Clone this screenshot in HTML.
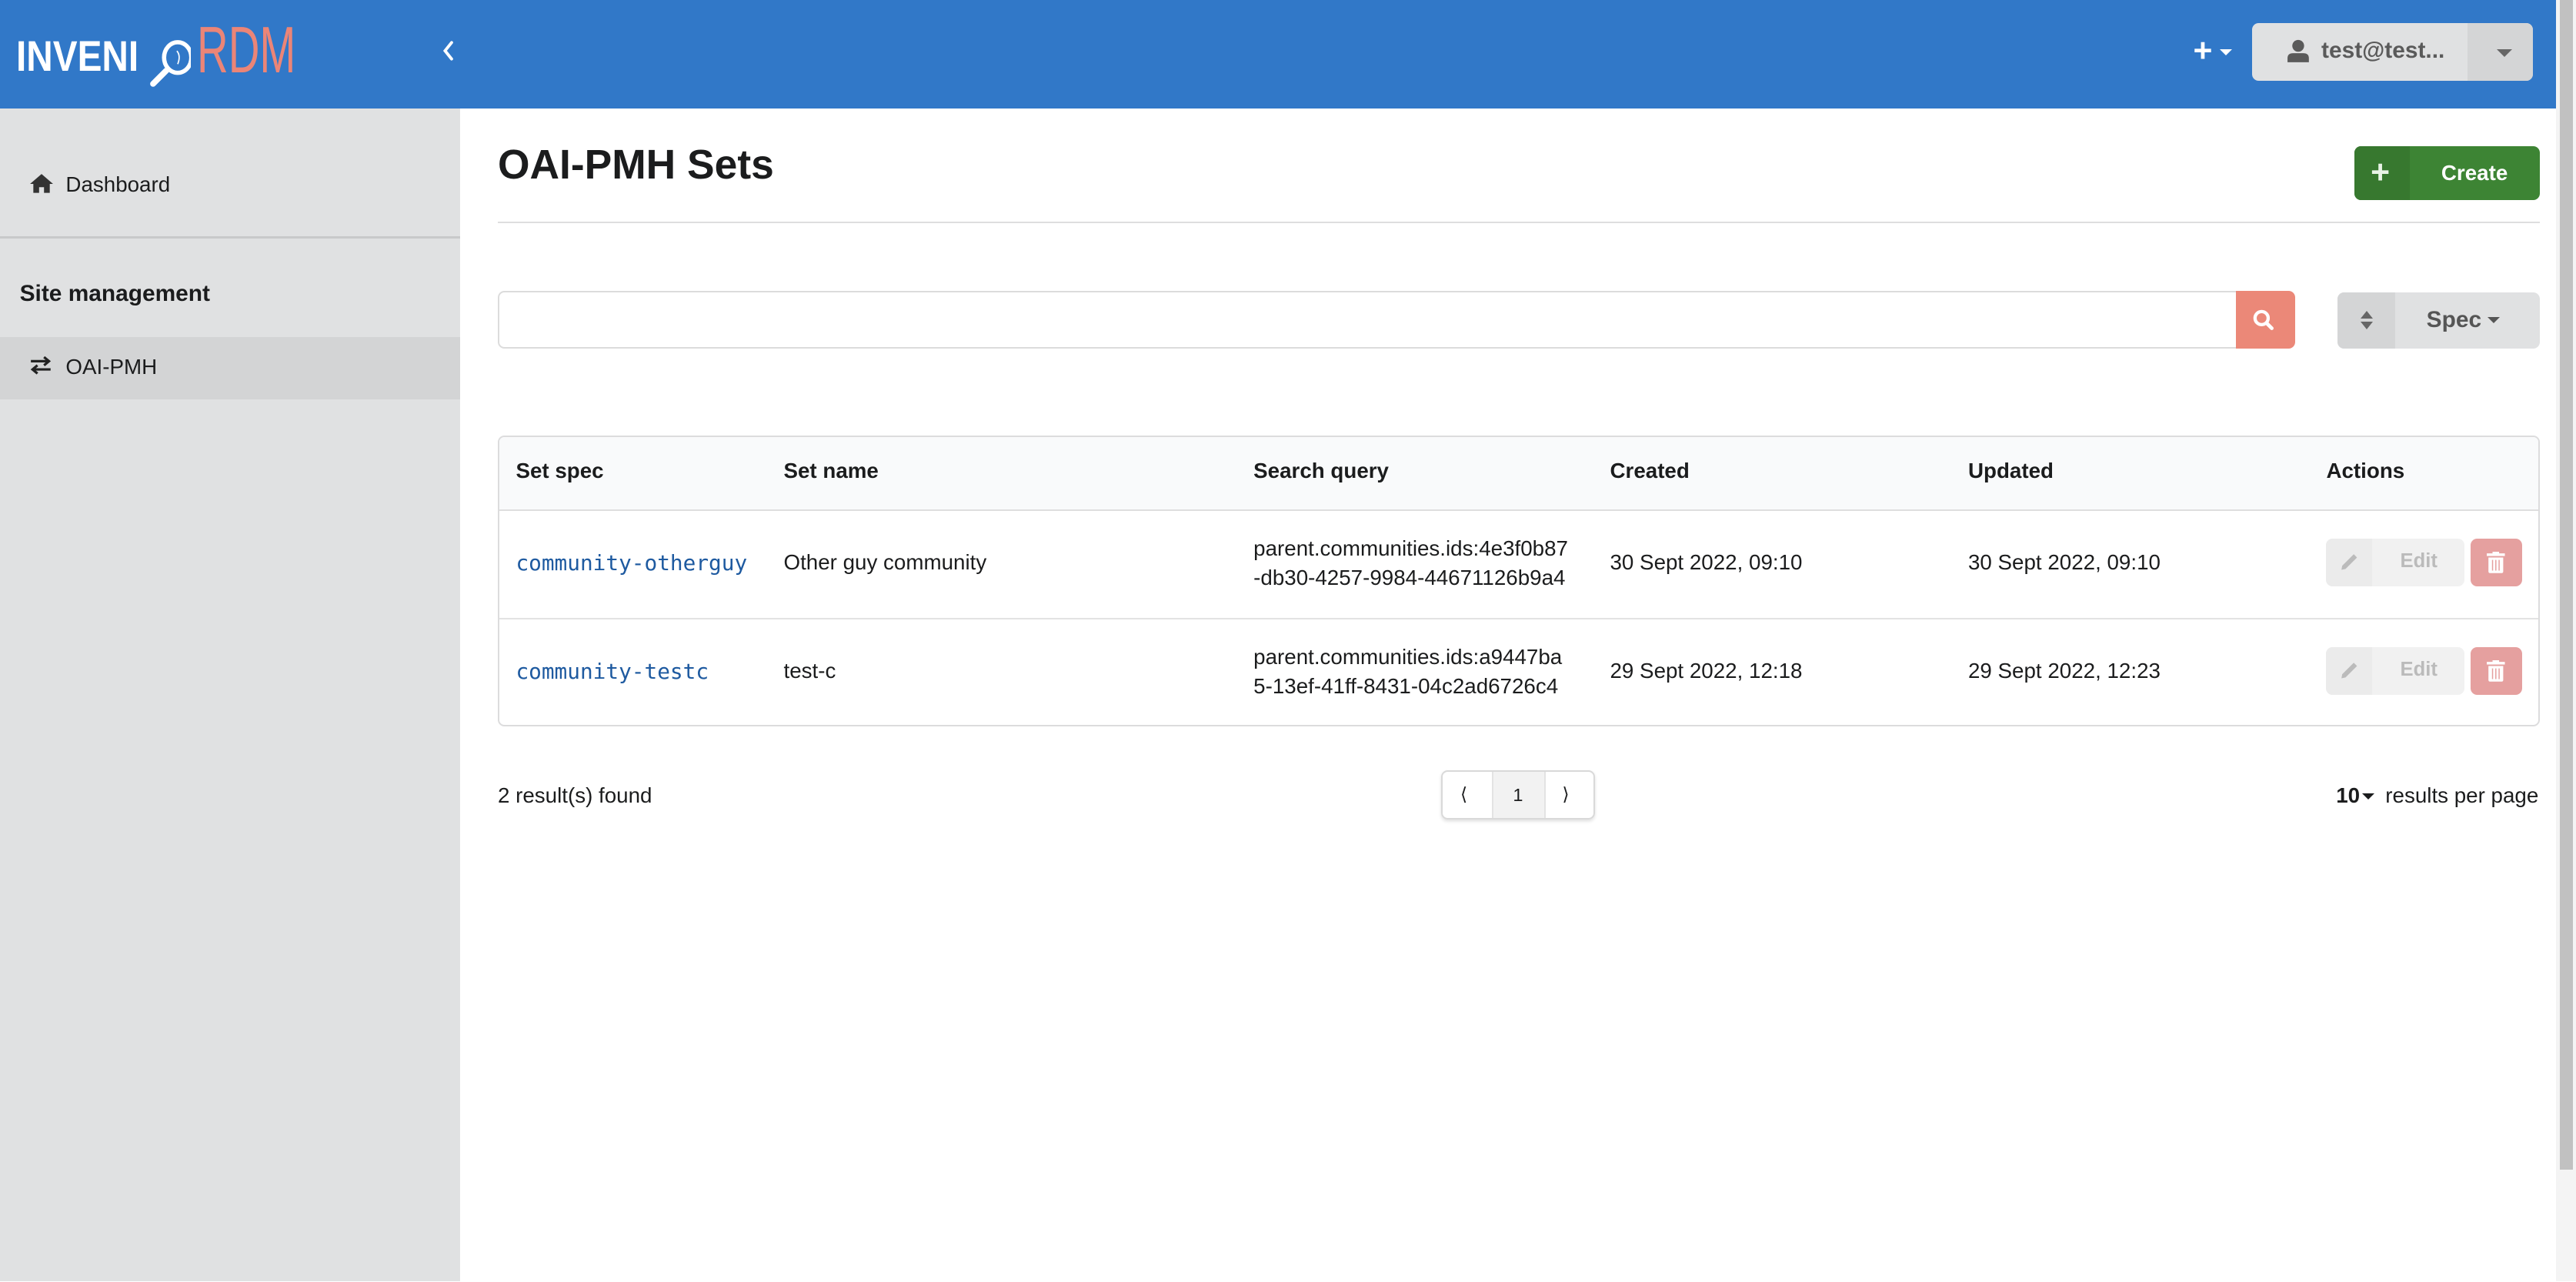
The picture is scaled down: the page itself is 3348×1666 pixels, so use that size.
<!DOCTYPE html>
<html><head><meta charset="utf-8"><style>
html,body{margin:0;padding:0;}
body{width:3348px;height:1666px;overflow:hidden;background:#fff;font-family:"Liberation Sans",Arial,sans-serif;}
#w{zoom:2.13520;width:1568px;height:780px;position:relative;color:#1b1c1d;font-size:13px;}
.a{position:absolute;}
.hdr{left:0;top:0;width:1556px;height:66px;background:#3178c8;}
.side{left:0;top:66px;width:280px;height:714px;background:#e0e1e2;}
.sb{left:1556px;top:0;width:12px;height:780px;background:#f4f4f4;}
.sbt{left:1558px;top:0;width:8px;height:712px;background:#c1c1c1;border-radius:0;}
.btn{border-radius:4px;}
</style></head><body><div id="w">
<div class="a hdr"></div>
<div class="a" style="left:10px;top:19px;color:#fff;font-weight:bold;font-size:26px;line-height:30px;white-space:nowrap;transform-origin:0 0;transform:scaleX(0.86);">INVENI</div>
<svg class="a" style="left:86px;top:22px" width="30" height="32" viewBox="0 0 30 32"><ellipse cx="22" cy="13" rx="8.3" ry="9.3" fill="none" stroke="#fff" stroke-width="2.6"/><path d="M21.5 9 Q24 12 22 17" fill="none" stroke="#fff" stroke-width="0.8"/><line x1="15" y1="21" x2="7" y2="29" stroke="#fff" stroke-width="3.6" stroke-linecap="round"/></svg>
<div class="a" style="left:120px;top:11px;color:#eb8577;font-size:40px;line-height:40px;white-space:nowrap;transform-origin:0 0;transform:scaleX(0.66);">RDM</div>
<svg class="a" style="left:268px;top:24px" width="10" height="14" viewBox="0 0 10 14"><path d="M7 2 L3 7 L7 12" fill="none" stroke="#fff" stroke-width="1.8" stroke-linecap="round"/></svg>
<div class="a" style="left:1335px;top:21px;color:#fff;font-size:20px;font-weight:bold;line-height:20px;">+</div>
<div class="a" style="left:1351px;top:30px;width:0;height:0;border-left:4px solid transparent;border-right:4px solid transparent;border-top:4px solid #fff;"></div>
<div class="a btn" style="left:1371px;top:14px;width:171px;height:35px;background:#e0e1e2;overflow:hidden;">
 <div class="a" style="right:0;top:0;width:40px;height:35px;background:#d4d5d6;"></div>
 <svg class="a" style="left:21px;top:10px" width="14" height="14" viewBox="0 0 14 14"><circle cx="7" cy="4" r="3.6" fill="#5a5a5a"/><path d="M0.5 14 V11.5 Q0.5 8.5 4 8.5 H10 Q13.5 8.5 13.5 11.5 V14Z" fill="#5a5a5a"/></svg>
 <div class="a" style="left:42px;top:9px;font-size:14px;font-weight:bold;color:#5a5a5a;">test@test...</div>
 <div class="a" style="right:13px;top:16px;border-left:5px solid transparent;border-right:5px solid transparent;border-top:5px solid #666;"></div>
</div>
<div class="a side"></div>
<div class="a" style="left:0;top:144px;width:280px;height:1px;background:#c8c9ca"></div>
<svg class="a" style="left:18px;top:105px" width="15" height="13" viewBox="0 0 15 13"><path d="M7.5 1 L0.5 7 H2.5 V12.5 H6 V9 H9 V12.5 H12.5 V7 H14.5Z" fill="#333"/></svg>
<div class="a" style="left:40px;top:105px;font-size:13px;">Dashboard</div>
<div class="a" style="left:12px;top:171px;font-size:14px;font-weight:bold;">Site management</div>
<div class="a" style="left:0;top:205px;width:280px;height:38px;background:#d3d4d5"></div>
<svg class="a" style="left:18px;top:217px" width="14" height="11" viewBox="0 0 14 11"><path d="M1 3 H12 M9 0.5 L12 3 L9 5.5 M13 8 H2 M5 5.5 L2 8 L5 10.5" fill="none" stroke="#222" stroke-width="1.5"/></svg>
<div class="a" style="left:40px;top:216px;font-size:13px;">OAI-PMH</div>
<div class="a sb"></div><div class="a sbt"></div>

<div class="a" style="left:303px;top:86px;font-size:25px;font-weight:bold;">OAI-PMH Sets</div>
<div class="a btn" style="left:1433px;top:89px;width:113px;height:33px;background:#3d8434;overflow:hidden;">
 <div class="a" style="left:0;top:0;width:34px;height:33px;background:#37782f"></div>
 <div class="a" style="left:10px;top:6px;color:#e8f3e6;font-size:20px;font-weight:bold;line-height:20px;">+</div>
 <div class="a" style="left:53px;top:9px;color:#fff;font-size:13px;font-weight:bold;">Create</div>
</div>
<div class="a" style="left:303px;top:135px;width:1243px;height:1px;background:#dededf"></div>

<div class="a" style="left:303px;top:177px;width:1093px;height:35px;border:1px solid #dcdcdc;border-radius:4px;box-sizing:border-box;"></div>
<div class="a" style="left:1361px;top:177px;width:36px;height:35px;background:#eb8878;border-radius:0 4px 4px 0;"></div>
<svg class="a" style="left:1371px;top:188px" width="14" height="14" viewBox="0 0 14 14"><circle cx="5.8" cy="5.8" r="4" fill="none" stroke="#fff" stroke-width="2"/><line x1="8.8" y1="8.8" x2="12" y2="12" stroke="#fff" stroke-width="2.2" stroke-linecap="round"/></svg>
<div class="a btn" style="left:1423px;top:178px;width:123px;height:34px;background:#e0e1e2;overflow:hidden;">
 <div class="a" style="left:0;top:0;width:35px;height:34px;background:#d4d5d6"></div>
 <div class="a" style="left:14px;top:11px;border-left:4px solid transparent;border-right:4px solid transparent;border-bottom:5px solid #666"></div>
 <div class="a" style="left:14px;top:18px;border-left:4px solid transparent;border-right:4px solid transparent;border-top:5px solid #666"></div>
 <div class="a" style="left:54px;top:9px;font-size:14px;font-weight:bold;color:#555">Spec</div>
 <div class="a" style="left:91px;top:15px;border-left:4px solid transparent;border-right:4px solid transparent;border-top:4px solid #555"></div>
</div>

<div class="a" style="left:303px;top:265px;width:1243px;height:177px;border:1px solid #dcdcdd;border-radius:4px;box-sizing:border-box;overflow:hidden;">
 <div class="a" style="left:0;top:0;width:1243px;height:44px;background:#f9fafb;border-bottom:1px solid #dedede"></div>
 <div class="a" style="left:0;top:110px;width:1243px;height:1px;background:#e3e3e3"></div>
</div>
<div style="font-size:13px;">
<div class="a" style="left:314px;top:279px;font-weight:bold">Set spec</div>
<div class="a" style="left:477px;top:279px;font-weight:bold">Set name</div>
<div class="a" style="left:763px;top:279px;font-weight:bold">Search query</div>
<div class="a" style="left:980px;top:279px;font-weight:bold">Created</div>
<div class="a" style="left:1198px;top:279px;font-weight:bold">Updated</div>
<div class="a" style="left:1416px;top:279px;font-weight:bold">Actions</div>

<div class="a" style="left:314px;top:335px;font-family:'DejaVu Sans Mono','Liberation Mono',monospace;font-size:13px;color:#1e5aa0">community-otherguy</div>
<div class="a" style="left:477px;top:335px;">Other guy community</div>
<div class="a" style="left:763px;top:325px;line-height:18px">parent.communities.ids:4e3f0b87<br>-db30-4257-9984-44671126b9a4</div>
<div class="a" style="left:980px;top:335px;">30 Sept 2022, 09:10</div>
<div class="a" style="left:1198px;top:335px;">30 Sept 2022, 09:10</div>

<div class="a" style="left:314px;top:401px;font-family:'DejaVu Sans Mono','Liberation Mono',monospace;font-size:13px;color:#1e5aa0">community-testc</div>
<div class="a" style="left:477px;top:401px;">test-c</div>
<div class="a" style="left:763px;top:391px;line-height:18px">parent.communities.ids:a9447ba<br>5-13ef-41ff-8431-04c2ad6726c4</div>
<div class="a" style="left:980px;top:401px;">29 Sept 2022, 12:18</div>
<div class="a" style="left:1198px;top:401px;">29 Sept 2022, 12:23</div>
</div>

<div class="a btn" style="left:1416px;top:328px;width:84px;height:29px;background:#f1f1f1;overflow:hidden"><div class="a" style="left:0;top:0;width:28px;height:29px;background:#ebebeb"></div><svg class="a" style="left:8px;top:8px" width="12" height="12" viewBox="0 0 12 12"><path d="M1 11 L1.5 8.5 L8.5 1.5 L10.5 3.5 L3.5 10.5Z" fill="#bbb"/></svg><div class="a" style="left:45px;top:7px;color:#bbb;font-weight:bold;font-size:12px">Edit</div></div>
<div class="a btn" style="left:1504px;top:328px;width:31px;height:29px;background:#e5a09f"></div>
<svg class="a" style="left:1513px;top:336px" width="12" height="13" viewBox="0 0 12 13"><rect x="0.5" y="1" width="11" height="1.6" fill="#fff"/><rect x="4" y="0" width="4" height="1.5" fill="#fff"/><path d="M1.5 3.5 H10.5 V12 Q10.5 13 9.5 13 H2.5 Q1.5 13 1.5 12Z" fill="#fff"/><path d="M4 5V11.5M6 5V11.5M8 5V11.5" stroke="#e5a09f" stroke-width="0.7"/></svg>
<div class="a btn" style="left:1416px;top:394px;width:84px;height:29px;background:#f1f1f1;overflow:hidden"><div class="a" style="left:0;top:0;width:28px;height:29px;background:#ebebeb"></div><svg class="a" style="left:8px;top:8px" width="12" height="12" viewBox="0 0 12 12"><path d="M1 11 L1.5 8.5 L8.5 1.5 L10.5 3.5 L3.5 10.5Z" fill="#bbb"/></svg><div class="a" style="left:45px;top:7px;color:#bbb;font-weight:bold;font-size:12px">Edit</div></div>
<div class="a btn" style="left:1504px;top:394px;width:31px;height:29px;background:#e5a09f"></div>
<svg class="a" style="left:1513px;top:402px" width="12" height="13" viewBox="0 0 12 13"><rect x="0.5" y="1" width="11" height="1.6" fill="#fff"/><rect x="4" y="0" width="4" height="1.5" fill="#fff"/><path d="M1.5 3.5 H10.5 V12 Q10.5 13 9.5 13 H2.5 Q1.5 13 1.5 12Z" fill="#fff"/><path d="M4 5V11.5M6 5V11.5M8 5V11.5" stroke="#e5a09f" stroke-width="0.7"/></svg>

<div class="a" style="left:303px;top:477px;">2 result(s) found</div>
<div class="a btn" style="left:877px;top:469px;width:94px;height:30px;border:1px solid #d9d9d9;box-sizing:border-box;box-shadow:0 1px 2px rgba(0,0,0,.12);overflow:hidden">
 <div class="a" style="left:30px;top:0;width:31px;height:30px;background:#f2f2f2;border-left:1px solid #e3e3e3;border-right:1px solid #e3e3e3"></div>
 <div class="a" style="left:11px;top:7px;font-size:11px">⟨</div>
 <div class="a" style="left:43px;top:8px;font-size:11px">1</div>
 <div class="a" style="left:73px;top:7px;font-size:11px">⟩</div>
</div>
<div class="a" style="left:1422px;top:477px;font-weight:bold">10</div>
<div class="a" style="left:1438px;top:483px;border-left:4px solid transparent;border-right:4px solid transparent;border-top:4px solid #1b1c1d"></div>
<div class="a" style="left:1452px;top:477px;">results per page</div>
</div></body></html>
